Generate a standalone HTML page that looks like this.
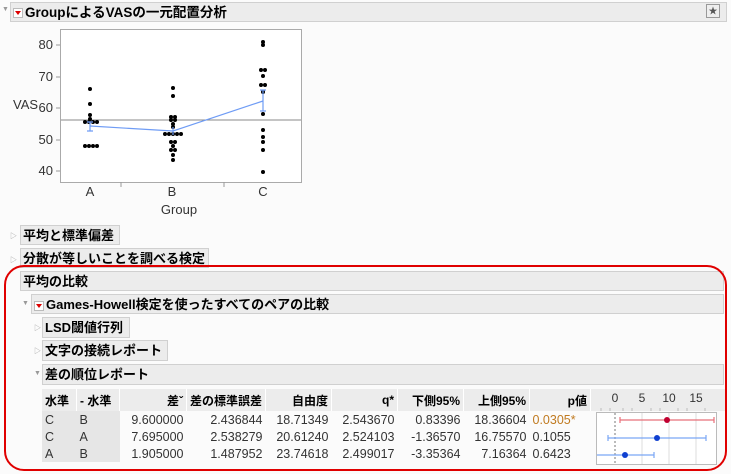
<!DOCTYPE html>
<html><head><meta charset="utf-8"><style>
body{margin:0;width:731px;height:474px;background:#fbfbfb;font-family:"Liberation Sans","Noto Sans CJK JP",sans-serif;position:relative;overflow:hidden;color:#000}
.a{position:absolute}
.h{position:absolute;background:#ececec;border:1px solid #d0d0d0;font-weight:bold;font-size:13px;line-height:19px;padding-left:2px;box-sizing:border-box}
.tri{position:absolute;font-size:7px;color:#999}
.rd{display:inline-block;width:8px;height:8px;background:#fff;border:1px solid #bbb;position:relative;vertical-align:middle;margin-right:2px}
.rd:after{content:"";position:absolute;left:1px;top:2px;border-left:3px solid transparent;border-right:3px solid transparent;border-top:4px solid #d00}
table{position:absolute;left:42px;top:389px;border-collapse:collapse;font-size:12.5px}
td{padding:0 3px;height:17px;text-align:right;white-space:nowrap;color:#333}
th{height:22px;background:#ececec;text-align:right;font-size:12px;padding:0 3px;border-right:1px solid #fff}
td.g{background:#e6e6e6;text-align:left}
th.l{text-align:left}
</style></head><body>
<div class="tri" style="left:2px;top:6px">▼</div>
<div class="h" style="left:10px;top:2px;width:717px;height:20px;font-size:13.5px"><span class="rd"></span>GroupによるVASの一元配置分析</div>
<div class="a" style="left:706px;top:4px;width:12px;height:12px;border:1px solid #999;background:#eee;font-size:9px;line-height:12px;text-align:center;color:#555">★</div>

<svg class="a" style="left:0;top:24px" width="320" height="200">
<g transform="translate(0,-24)">
<rect x="60.5" y="29.5" width="241" height="153" fill="#fff" stroke="#aaa"/>
<g font-size="13" fill="#333" text-anchor="end" font-family="Liberation Sans">
<text x="53" y="49">80</text><text x="53" y="81">70</text><text x="53" y="112">60</text><text x="53" y="144">50</text><text x="53" y="175">40</text>
</g>
<g stroke="#999"><line x1="56" x2="60" y1="45" y2="45"/><line x1="56" x2="60" y1="77" y2="77"/><line x1="56" x2="60" y1="108" y2="108"/><line x1="56" x2="60" y1="140" y2="140"/><line x1="56" x2="60" y1="171" y2="171"/>
<line x1="121" x2="121" y1="182" y2="187"/><line x1="224" x2="224" y1="182" y2="187"/></g>
<text x="13" y="109" font-size="13" fill="#333">VAS</text>
<g font-size="13" fill="#333" text-anchor="middle"><text x="90" y="196">A</text><text x="172" y="196">B</text><text x="263" y="196">C</text><text x="179" y="214">Group</text></g>
<line x1="61" x2="301" y1="120" y2="120" stroke="#888"/>
<g fill="#000">
<circle cx="90" cy="89" r="2"/><circle cx="90" cy="104" r="2"/><circle cx="90" cy="115" r="2"/><circle cx="90" cy="119" r="2"/>
<circle cx="85" cy="122" r="2"/><circle cx="89" cy="122" r="2"/><circle cx="93" cy="122" r="2"/><circle cx="97" cy="122" r="2"/>
<circle cx="85" cy="146" r="2"/><circle cx="89" cy="146" r="2"/><circle cx="93" cy="146" r="2"/><circle cx="97" cy="146" r="2"/>
<circle cx="173" cy="88" r="2"/><circle cx="173" cy="96" r="2"/>
<circle cx="171" cy="117" r="2"/><circle cx="175" cy="117" r="2"/><circle cx="171" cy="120" r="2"/><circle cx="175" cy="120" r="2"/><circle cx="173" cy="124" r="2"/><circle cx="173" cy="127" r="2"/>
<circle cx="165" cy="134" r="2"/><circle cx="169" cy="134" r="2"/><circle cx="173" cy="134" r="2"/><circle cx="177" cy="134" r="2"/><circle cx="181" cy="134" r="2"/>
<circle cx="171" cy="142" r="2"/><circle cx="175" cy="142" r="2"/><circle cx="173" cy="146" r="2"/><circle cx="171" cy="150" r="2"/><circle cx="175" cy="150" r="2"/><circle cx="173" cy="155" r="2"/><circle cx="173" cy="160" r="2"/>
<circle cx="263" cy="42" r="2"/><circle cx="263" cy="45" r="2"/><circle cx="261" cy="70" r="2"/><circle cx="265" cy="70" r="2"/><circle cx="263" cy="76" r="2"/>
<circle cx="261" cy="85" r="2"/><circle cx="265" cy="85" r="2"/><circle cx="263" cy="92" r="2"/><circle cx="263" cy="114" r="2"/>
<circle cx="263" cy="130" r="2"/><circle cx="263" cy="137" r="2"/><circle cx="263" cy="142" r="2"/><circle cx="263" cy="150" r="2"/><circle cx="263" cy="172" r="2"/>
</g>
<g stroke="#6f9cf5" fill="none" stroke-width="1.2">
<polyline points="90,126 173,131 263,101"/>
<path d="M90 122V131M87 122H93M87 131H93M263 90V111M260 90H266M260 111H266M173 127V135"/>
</g>
</g></svg>

<div class="tri" style="left:10px;top:231px">▷</div>
<div class="h" style="left:20px;top:225px;width:100px;height:20px">平均と標準偏差</div>
<div class="tri" style="left:10px;top:255px">▷</div>
<div class="h" style="left:20px;top:248px;width:189px;height:20px">分散が等しいことを調べる検定</div>
<div class="h" style="left:20px;top:271px;width:704px;height:20px">平均の比較</div>
<div class="tri" style="left:22px;top:300px">▼</div>
<div class="h" style="left:31px;top:294px;width:693px;height:20px"><span class="rd"></span>Games-Howell検定を使ったすべてのペアの比較</div>
<div class="tri" style="left:34px;top:323px">▷</div>
<div class="h" style="left:42px;top:317px;width:88px;height:21px">LSD閾値行列</div>
<div class="tri" style="left:34px;top:346px">▷</div>
<div class="h" style="left:42px;top:340px;width:126px;height:21px">文字の接続レポート</div>
<div class="tri" style="left:34px;top:370px">▼</div>
<div class="h" style="left:42px;top:364px;width:682px;height:21px">差の順位レポート</div>

<table>
<tr><th class="l" style="width:28px">水準</th><th class="l" style="width:36px">- 水準</th><th style="width:60px">差ˇ</th><th style="width:72px">差の標準誤差</th><th style="width:59px">自由度</th><th style="width:59px">q*</th><th style="width:59px">下側95%</th><th style="width:59px">上側95%</th><th style="width:54px">p値</th><th style="width:128px;border:0"></th></tr>
<tr><td class="g">C</td><td class="g">B</td><td>9.600000</td><td>2.436844</td><td>18.71349</td><td>2.543670</td><td>0.83396</td><td>18.36604</td><td style="color:#c07a20;text-align:left">0.0305*</td><td></td></tr>
<tr><td class="g">C</td><td class="g">A</td><td>7.695000</td><td>2.538279</td><td>20.61240</td><td>2.524103</td><td>-1.36570</td><td>16.75570</td><td style="text-align:left">0.1055</td><td></td></tr>
<tr><td class="g">A</td><td class="g">B</td><td>1.905000</td><td>1.487952</td><td>23.74618</td><td>2.499017</td><td>-3.35364</td><td>7.16364</td><td style="text-align:left">0.6423</td><td></td></tr>
</table>

<svg class="a" style="left:590px;top:388px" width="135" height="80">
<g transform="translate(-590,-388)">
<g font-size="12" fill="#333" text-anchor="middle"><text x="615" y="402">0</text><text x="642" y="402">5</text><text x="669" y="402">10</text><text x="696" y="402">15</text></g>
<rect x="596.5" y="412.5" width="120" height="52" fill="#fff" stroke="#bbb"/>
<g stroke="#ddd"><line x1="642" x2="642" y1="413" y2="464"/><line x1="669" x2="669" y1="413" y2="464"/><line x1="696" x2="696" y1="413" y2="464"/></g>
<line x1="615" x2="615" y1="413" y2="464" stroke="#777" stroke-dasharray="2,2"/>
<g stroke="#bbb"><path d="M601 408V411M610 408V411M623 408V411M632 408V411M651 408V411M660 408V411M678 408V411M687 408V411M705 408V411"/></g>
<g stroke="#e8707a" stroke-width="1.2"><path d="M620 420H714M620 417V423M714 417V423"/></g><circle cx="667" cy="420" r="3" fill="#c00030"/>
<g stroke="#7aa6f5" stroke-width="1.2"><path d="M608 438H706M608 435V441M706 435V441"/></g><circle cx="657" cy="438" r="3" fill="#1040d0"/>
<g stroke="#7aa6f5" stroke-width="1.2"><path d="M597 455H654M654 452V458"/></g><circle cx="625" cy="455" r="3" fill="#1040d0"/>
</g></svg>

<div class="a" style="left:4px;top:265px;width:719px;height:202px;border:2.5px solid #e00000;border-radius:20px"></div>
</body></html>
